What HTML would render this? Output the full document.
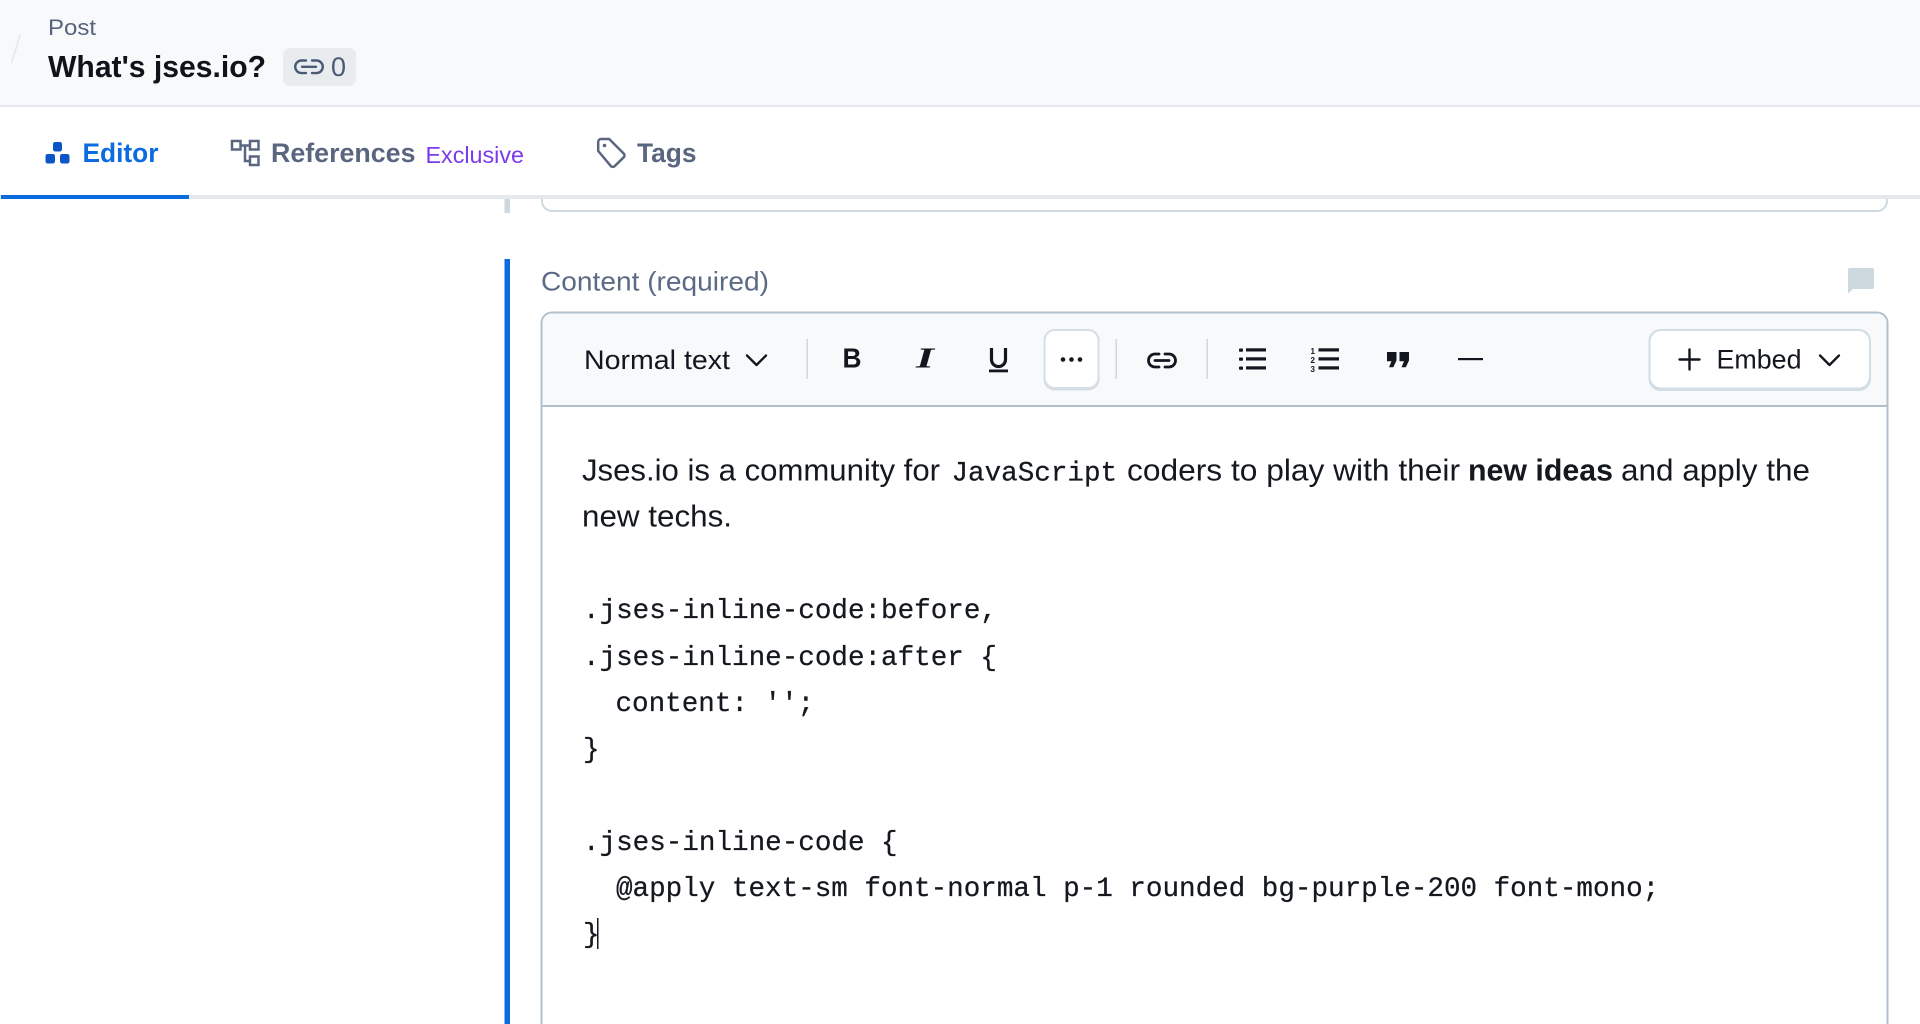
<!DOCTYPE html>
<html lang="en">
<head>
<meta charset="utf-8">
<title>What's jses.io?</title>
<style>
html,body{margin:0;padding:0;background:#fff;width:1920px;height:1024px;overflow:hidden}
svg{display:block}
text{font-family:"Liberation Sans",sans-serif;white-space:pre}
.m{font-family:"Liberation Mono",monospace;font-size:27.6px;fill:#14181f;stroke:#14181f;stroke-width:.25px}
.b{font-size:31px;fill:#14181f}
.t{font-size:27px;font-weight:700}
</style>
</head>
<body>
<svg width="1920" height="1024" viewBox="0 0 1920 1024" xmlns="http://www.w3.org/2000/svg">
<!-- header -->
<rect x="0" y="0" width="1920" height="105" fill="#f8f9fb"/>
<rect x="0" y="105" width="1920" height="2" fill="#e4e8ec"/>
<path d="M20.5 34L11.5 63" stroke="#e6e8ec" stroke-width="1.6" fill="none"/>
<text x="48" y="35" font-size="22" fill="#55637c" textLength="48" lengthAdjust="spacingAndGlyphs">Post</text>
<text x="48" y="77" font-size="30.5" font-weight="700" fill="#0f131a" textLength="218" lengthAdjust="spacingAndGlyphs">What's jses.io?</text>
<rect x="283" y="48" width="73" height="38" rx="7" fill="#e9ecef"/>
<g fill="none" stroke="#4a5a75" stroke-width="2.4" stroke-linecap="round">
<path d="M306 60.5h-4.5a6.3 6.3 0 0 0 0 12.600h4.500"/>
<path d="M312 60.5h4.500a6.300 6.300 0 0 1 0 12.600h-4.500"/>
<path d="M302 66.800h14"/>
</g>
<text x="331" y="76" font-size="27" fill="#4a5a75" textLength="15" lengthAdjust="spacingAndGlyphs">0</text>

<!-- upper field -->
<path d="M542 190V201a10 10 0 0 0 10 10H1877a10 10 0 0 0 10-10V190" fill="none" stroke="#cfd9e0" stroke-width="2"/>
<rect x="504.500" y="190" width="5.500" height="23" fill="#cdd7df"/>

<!-- tabs -->
<rect x="0" y="107" width="1920" height="88" fill="#fff"/>
<rect x="0" y="195" width="1920" height="4" fill="#e5e9ec"/>
<rect x="1" y="195" width="188" height="4" fill="#0d6be0"/>
<g fill="#0b55c7">
<rect x="53" y="142" width="9" height="9.500" rx="2.200"/>
<rect x="45.500" y="154" width="9.500" height="9.500" rx="2.200"/>
<rect x="60" y="154" width="9.500" height="9.500" rx="2.200"/>
</g>
<text x="82.500" y="162" class="t" fill="#0d6be0" textLength="76" lengthAdjust="spacingAndGlyphs">Editor</text>
<g fill="none" stroke="#5a6680" stroke-width="2.500">
<rect x="232" y="141" width="8.500" height="8.500"/>
<rect x="250" y="141" width="8.500" height="8.500"/>
<rect x="250" y="156.500" width="8.500" height="8.500"/>
<path d="M240.500 145.500h9.500M245 145.500v15.500h5"/>
</g>
<text x="271" y="162" class="t" fill="#5a6680" textLength="144.500" lengthAdjust="spacingAndGlyphs">References</text>
<text x="425.500" y="163" font-size="23.500" fill="#7c3aed" textLength="98.500" lengthAdjust="spacingAndGlyphs">Exclusive</text>
<path d="M598.200 142a3 3 0 0 1 3-3h8l14.600 14.600a2.600 2.600 0 0 1 0 3.600l-9.200 9a2.600 2.600 0 0 1-3.600 0L598.200 151z" fill="none" stroke="#5a6680" stroke-width="2.500" stroke-linejoin="round"/>
<circle cx="604.500" cy="145.500" r="1.800" fill="#5a6680"/>
<text x="637" y="162" class="t" fill="#5a6680" textLength="59.500" lengthAdjust="spacingAndGlyphs">Tags</text>

<!-- content -->
<rect x="504.500" y="259" width="5.500" height="765" fill="#0d6be0"/>
<text x="541" y="290.500" font-size="26.500" fill="#5b6b85" textLength="228" lengthAdjust="spacingAndGlyphs">Content (required)</text>
<path d="M1850 268h22a2 2 0 0 1 2 2v17a2 2 0 0 1-2 2h-19l-5 4.500V270a2 2 0 0 1 2-2z" fill="#cdd8df"/>

<!-- editor -->
<path d="M541.500 1030V323a10.500 10.500 0 0 1 10.500-10.500H1877a10.500 10.500 0 0 1 10.500 10.500V1030z" fill="#fff" stroke="#b0c0cd" stroke-width="2"/>
<path d="M542.500 405.500V323a9.500 9.500 0 0 1 9.500-9.500H1877a9.500 9.500 0 0 1 9.500 9.500v82.500z" fill="#f8f9fb"/>
<rect x="542" y="405" width="1345" height="2" fill="#b0c0cd"/>

<text x="584" y="369" font-size="27" fill="#12161f" textLength="146" lengthAdjust="spacingAndGlyphs">Normal text</text>
<path d="M747 355.500l9.500 9.500 9.500-9.500" fill="none" stroke="#12161f" stroke-width="2.300" stroke-linecap="round" stroke-linejoin="round"/>
<rect x="806.500" y="339" width="1.500" height="40" fill="#cdd7df"/>
<text x="842.500" y="367.500" font-size="28" font-weight="700" fill="#12161f" textLength="19" lengthAdjust="spacingAndGlyphs">B</text>
<text x="916" y="367.500" font-size="28" font-weight="700" font-style="italic" style="font-family:'Liberation Serif',serif" fill="#12161f" textLength="18" lengthAdjust="spacingAndGlyphs">I</text>
<path d="M991.500 348v11.500a7 7 0 0 0 14 0V348" fill="none" stroke="#12161f" stroke-width="3.200"/>
<rect x="989" y="369.500" width="19" height="2.800" fill="#12161f"/>
<rect x="1043.500" y="329" width="56" height="61.500" rx="11" fill="#d6dfe5"/>
<rect x="1045.500" y="331" width="52" height="56" rx="9.500" fill="#fff"/>
<circle cx="1063" cy="359.500" r="2.300" fill="#12161f"/><circle cx="1071.500" cy="359.500" r="2.300" fill="#12161f"/><circle cx="1080" cy="359.500" r="2.300" fill="#12161f"/>
<rect x="1115.500" y="339" width="1.500" height="40" fill="#cdd7df"/>
<g fill="none" stroke="#12161f" stroke-width="2.800" stroke-linecap="round">
<path d="M1159 354h-4a6.500 6.500 0 0 0 0 13h4"/>
<path d="M1165 354h4a6.500 6.500 0 0 1 0 13h-4"/>
<path d="M1155 360.500h14"/>
</g>
<rect x="1206.500" y="339" width="1.500" height="40" fill="#cdd7df"/>
<g fill="#12161f">
<rect x="1239" y="348.500" width="4" height="3.200" rx=".8"/><rect x="1246" y="348.300" width="20" height="3.200"/>
<rect x="1239" y="357.500" width="4" height="3.200" rx=".8"/><rect x="1246" y="357.300" width="20" height="3.200"/>
<rect x="1239" y="366.500" width="4" height="3.200" rx=".8"/><rect x="1246" y="366.300" width="20" height="3.200"/>
<rect x="1318.500" y="348.300" width="20.500" height="3.200"/><rect x="1318.500" y="357.300" width="20.500" height="3.200"/><rect x="1318.500" y="366.300" width="20.500" height="3.200"/>
<text x="1310.500" y="354" font-size="8" font-weight="700">1</text>
<text x="1310.500" y="363" font-size="8" font-weight="700">2</text>
<text x="1310.500" y="372" font-size="8" font-weight="700">3</text>
<path d="M1387 352h9.500v8.500l-3.200 6.700h-4.300l2.500-6h-4.500z"/>
<path d="M1399.500 352h9.500v8.500l-3.200 6.700h-4.300l2.500-6h-4.500z"/>
<rect x="1458" y="358" width="25" height="2.200"/>
</g>
<rect x="1648.500" y="329" width="222.500" height="62" rx="12" fill="#d3dde4"/>
<rect x="1650.500" y="331" width="218.500" height="56.500" rx="10.500" fill="#fff"/>
<path d="M1689.500 349.500v20M1679.500 359.500h20" stroke="#12161f" stroke-width="2.400" stroke-linecap="round"/>
<text x="1716.500" y="368.500" font-size="27" fill="#12161f" textLength="85" lengthAdjust="spacingAndGlyphs">Embed</text>
<path d="M1820 355.500l9.500 9.500 9.500-9.500" fill="none" stroke="#12161f" stroke-width="2.300" stroke-linecap="round" stroke-linejoin="round"/>

<!-- body -->
<text x="582" y="480.500" class="b" textLength="358" lengthAdjust="spacingAndGlyphs">Jses.io is a community for</text>
<text x="951.500" y="480.500" class="m">JavaScript</text>
<text x="1127" y="480.500" class="b" textLength="333" lengthAdjust="spacingAndGlyphs">coders to play with their</text>
<text x="1468" y="480.500" class="b" font-weight="700" textLength="145" lengthAdjust="spacingAndGlyphs">new ideas</text>
<text x="1621" y="480.500" class="b" textLength="189" lengthAdjust="spacingAndGlyphs">and apply the</text>
<text x="582" y="526.500" class="b" textLength="150" lengthAdjust="spacingAndGlyphs">new techs.</text>

<text x="583" y="618" class="m">.jses-inline-code:before,</text>
<text x="583" y="665" class="m">.jses-inline-code:after {</text>
<text x="615.500" y="711" class="m">content: '';</text>
<text x="583" y="757" class="m">}</text>
<text x="583" y="850" class="m">.jses-inline-code {</text>
<text x="616" y="896" class="m">@apply text-sm font-normal p-1 rounded bg-purple-200 font-mono;</text>
<text x="583" y="942" class="m">}</text>
<rect x="597" y="918" width="1.500" height="31" fill="#14181f"/>
</svg>
</body>
</html>
